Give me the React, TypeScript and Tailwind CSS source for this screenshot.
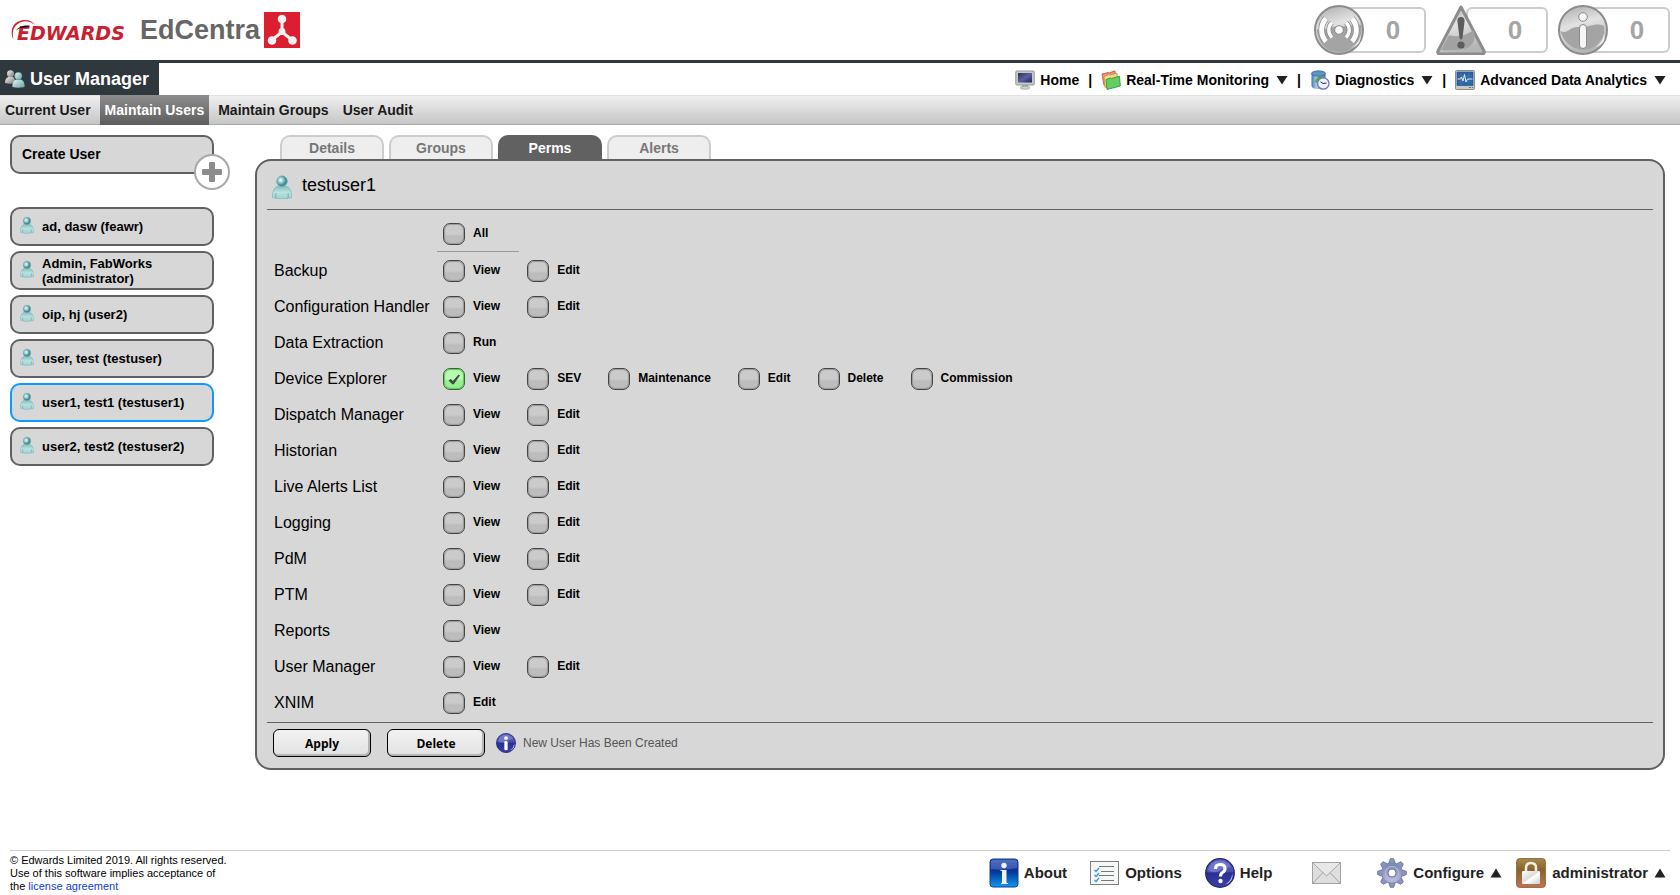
import { useState } from "react";
import type { ReactNode } from "react";

function UserIcon({ className }: { className: string }) {
  return (
    <svg viewBox="0 0 20 24" className={className} aria-hidden="true">
      <defs>
        <radialGradient id="userHead" cx="0.38" cy="0.4" r="0.65">
          <stop offset="0" stopColor="#f4fdfd" />
          <stop offset="0.3" stopColor="#a8d5d8" />
          <stop offset="0.75" stopColor="#3a8790" />
          <stop offset="1" stopColor="#5a9da3" />
        </radialGradient>
        <linearGradient id="userBody" x1="0" y1="0" x2="0" y2="1">
          <stop offset="0" stopColor="#86bfc0" />
          <stop offset="0.5" stopColor="#b9e3df" />
          <stop offset="1" stopColor="#9ccfcf" />
        </linearGradient>
      </defs>
      <path d="M6 11 Q10 13 14 11 Q18.500 12.500 19.500 19 L19.700 22.500 Q19 23.200 16.500 23 L16 23.500 Q10 24.500 4 23.500 L3.500 23 Q1 23.200 0.300 22.500 L0.500 19 Q1.500 12.500 6 11Z" fill="url(#userBody)" stroke="#7aafb3" strokeWidth="0.600" />
      <path d="M3.800 18 V23 M16.200 18 V23" stroke="#5f9ea3" strokeWidth="0.700" />
      <circle cx="10" cy="6.200" r="5.400" fill="url(#userHead)" stroke="#6ba4a9" strokeWidth="0.500" />
    </svg>
  );
}

function UsersIcon() {
  return (
    <svg viewBox="0 0 20 18" className="h-[18px] w-5" aria-hidden="true">
      <defs>
        <linearGradient id="usersGrey" x1="0" y1="0" x2="1" y2="1">
          <stop offset="0" stopColor="#f2f2f2" />
          <stop offset="1" stopColor="#777" />
        </linearGradient>
        <linearGradient id="usersTeal" x1="0" y1="0" x2="1" y2="1">
          <stop offset="0" stopColor="#e3f6f6" />
          <stop offset="1" stopColor="#68a3a8" />
        </linearGradient>
      </defs>
      <path d="M0 13 Q0 8 3.500 7 H8 Q10 8 10 13 Q5 14.500 0 13Z" fill="url(#usersGrey)" />
      <circle cx="5.500" cy="3.800" r="3.500" fill="url(#usersGrey)" />
      <path d="M7.500 17 Q7 11 11 9.500 H16 Q20 11 19.500 17 Q13 18.500 7.500 17Z" fill="url(#usersTeal)" />
      <circle cx="13.300" cy="6" r="3.700" fill="url(#usersTeal)" stroke="#4d868c" strokeWidth="0.400" />
    </svg>
  );
}

function EdwardsLogo() {
  return (
    <svg viewBox="0 0 118 26" className="h-[26px] w-[118px]" role="img" aria-label="Edwards">
      <text x="7" y="23" fontFamily="DejaVu Sans, sans-serif" fontWeight="700" fontStyle="italic" fontSize="19" fill="#c8202f">EDWARDS</text>
      <path d="M3.500 22.500 C-1 14 3 5 12 3.200 C17.500 2.200 22 3.500 25 8 C20 4 15 3.800 11.500 5 C4 7.500 1.500 14 3.500 22.500Z" fill="#c8202f" />
      <path d="M6 13.500 C9 9.500 13 8 20 8.500 L17 10.500 C12.500 10 9 11 6 13.500Z" fill="#111" />
    </svg>
  );
}

function MoleculeLogo() {
  return (
    <svg viewBox="0 0 36 36" className="size-9" aria-hidden="true">
      <rect width="36" height="36" fill="#db1f30" />
      <path d="M18 7 V20 L8 28 M18 20 L28 28" stroke="#f5f2f2" strokeWidth="3" fill="none" />
      <circle cx="18" cy="7" r="4.300" fill="#f5f2f2" />
      <circle cx="18" cy="19.500" r="3.400" fill="#f5f2f2" />
      <circle cx="8" cy="28.500" r="4.300" fill="#f5f2f2" />
      <circle cx="28.500" cy="28.500" r="4.300" fill="#f5f2f2" />
    </svg>
  );
}

function GreyDefs() {
  return (
    <svg className="absolute size-0" aria-hidden="true">
      <defs>
        <linearGradient id="greyGloss" x1="0" y1="0" x2="0.300" y2="1">
          <stop offset="0" stopColor="#a9a9a9" />
          <stop offset="0.450" stopColor="#e2e2e2" />
          <stop offset="1" stopColor="#b5b5b5" />
        </linearGradient>
      </defs>
    </svg>
  );
}

function BroadcastIcon() {
  const inner = "M18 32.500 A10.300 10.300 0 0 1 18 17.500 M32 32.500 A10.300 10.300 0 0 0 32 17.500";
  const outer = "M12 36.500 A17.300 17.300 0 0 1 12 13.500 M38 36.500 A17.300 17.300 0 0 0 38 13.500";
  return (
    <svg viewBox="0 0 50 50" className="size-[50px]" aria-hidden="true">
      <circle cx="25" cy="25" r="24" fill="url(#greyGloss)" stroke="#8c8c8c" strokeWidth="2" />
      <path d="M2.500 24 C10 27 16 21 26 21 C34 22 40 19 47.500 20 C48 30 45 36 41 39 C34 46 32 47 25 47 C12 47 4 38 2.500 24Z" fill="#a4a4a4" />
      <path d="M38 43 Q45 38 46.500 30 Q48 39 38 43Z" fill="#eee" />
      <g fill="none">
        <path d={inner} stroke="#8a8a8a" strokeWidth="5" />
        <path d={outer} stroke="#8a8a8a" strokeWidth="6.500" />
        <path d={inner} stroke="#fff" strokeWidth="3.400" />
        <path d={outer} stroke="#fff" strokeWidth="5" />
      </g>
      <circle cx="25" cy="25" r="4.300" fill="#fff" stroke="#8a8a8a" strokeWidth="1" />
    </svg>
  );
}

function WarningIcon() {
  return (
    <svg viewBox="0 0 50 50" className="size-[50px]" aria-hidden="true">
      <path d="M25 2 L48 46 Q49 49 46 49 H4 Q1 49 2 46Z" fill="url(#greyGloss)" stroke="#8c8c8c" strokeWidth="3" strokeLinejoin="round" />
      <path d="M5 45 L13 30 Q24 34 38 25 Q41 36 33 42 Q26 46 5 45Z" fill="#a2a2a2" />
      <path d="M25 12 Q29 12 28.500 17 L26.500 33 Q25 36 23.500 33 L21.500 17 Q21 12 25 12Z" fill="#5c5c5c" />
      <circle cx="25" cy="40" r="3.600" fill="#5c5c5c" />
    </svg>
  );
}

function InfoAlertIcon() {
  return (
    <svg viewBox="0 0 50 50" className="size-[50px]" aria-hidden="true">
      <circle cx="25" cy="25" r="24" fill="url(#greyGloss)" stroke="#8c8c8c" strokeWidth="2" />
      <path d="M2.500 26 C9 30 12 21 21 22 C33 23 36 17 46 21 C48 31 42 37 37 41 C28 48 8 46 2.500 26Z" fill="#a4a4a4" />
      <path d="M38 42 Q45 37 46 29 Q49 38 38 42Z" fill="#f0f0f0" />
      <circle cx="25" cy="12" r="4.300" fill="#f6f6f6" stroke="#8a8a8a" strokeWidth="1" />
      <rect x="21.500" y="19.500" width="7" height="24" rx="3.500" fill="#f6f6f6" stroke="#8a8a8a" strokeWidth="1" />
    </svg>
  );
}

function HomeIcon() {
  return (
    <svg viewBox="0 0 20 20" className="size-5" aria-hidden="true">
      <defs>
        <linearGradient id="screen" x1="0" y1="0" x2="1" y2="1">
          <stop offset="0" stopColor="#2b2f66" />
          <stop offset="0.500" stopColor="#5a609c" />
          <stop offset="1" stopColor="#20245c" />
        </linearGradient>
      </defs>
      <rect x="0.800" y="1" width="18.400" height="14" rx="1" fill="#c9c9c9" stroke="#979797" />
      <rect x="3" y="3" width="14" height="9.500" fill="url(#screen)" />
      <path d="M7 15.500 H13 V17 H7Z" fill="#777" />
      <ellipse cx="10" cy="17.700" rx="5" ry="1.600" fill="#d0d0d0" stroke="#999" strokeWidth="0.600" />
    </svg>
  );
}

function FoldersIcon() {
  return (
    <svg viewBox="0 0 20 20" className="size-5" aria-hidden="true">
      <path d="M1 4 L7 2.500 L8 3 L14 0.800 L15 12 L3 15.500Z" fill="#ef8d85" stroke="#c9453d" strokeWidth="0.800" />
      <path d="M3 6.500 L8 4.500 L9 5 L16 3.200 L17 14 L4 17.500Z" fill="#f4dc83" stroke="#bd9739" strokeWidth="0.800" />
      <path d="M5 9.500 L9.500 8 L10.500 8.500 L18.500 6.200 L19.300 16 L6 19.500Z" fill="#62cf62" stroke="#2e9635" strokeWidth="0.900" />
    </svg>
  );
}

function DiagnosticsIcon() {
  return (
    <svg viewBox="0 0 20 20" className="size-5" aria-hidden="true">
      <defs>
        <linearGradient id="drum" x1="0" y1="0" x2="1" y2="0">
          <stop offset="0" stopColor="#4478ad" />
          <stop offset="0.350" stopColor="#a9cbe8" />
          <stop offset="1" stopColor="#3b70a6" />
        </linearGradient>
      </defs>
      <path d="M1.500 3.500 V16 Q2 19 8.500 19 Q15.500 19 15.500 16 V3.500Z" fill="url(#drum)" />
      <ellipse cx="8.500" cy="3.500" rx="7" ry="2.700" fill="#5d92c3" stroke="#2f6293" strokeWidth="0.700" />
      <circle cx="13.300" cy="13.500" r="5.700" fill="#eef0fa" stroke="#6f76b8" strokeWidth="1.300" />
      <path d="M6.200 12.500 Q7 7 12.500 6.500" fill="none" stroke="#45a83c" strokeWidth="2" />
      <path d="M13 13.500 L10.500 11.800 M13 13.500 L16.500 13" stroke="#333" strokeWidth="1" />
    </svg>
  );
}

function AnalyticsIcon() {
  return (
    <svg viewBox="0 0 20 20" className="size-5" aria-hidden="true">
      <rect x="0.500" y="0.500" width="19" height="19" rx="1" fill="#c9c9c4" stroke="#8d8d8d" />
      <rect x="2" y="2" width="16" height="13.500" fill="#2b62a8" stroke="#244d82" strokeWidth="0.600" />
      <path d="M2.500 6 H17.500 M2.500 12 H17.500 M6 2.500 V15 M14 2.500 V15" stroke="#4d80bd" strokeWidth="0.500" />
      <path d="M2.500 9 H5.500 L6.500 7 L8 11 L9.500 4.500 L11 12 L12.500 9 H17.500" fill="none" stroke="#e4f1e4" strokeWidth="1" />
      <path d="M14 17.500 H16 M17 17.500 H18" stroke="#666" />
    </svg>
  );
}

function BlueOrb({ className, children }: { className: string; children: ReactNode }) {
  return (
    <svg viewBox="0 0 30 30" className={className} aria-hidden="true">
      <defs>
        <linearGradient id="orb" x1="0" y1="0" x2="0" y2="1">
          <stop offset="0" stopColor="#5a5fc0" />
          <stop offset="0.450" stopColor="#4a4fae" />
          <stop offset="0.500" stopColor="#2a2f94" />
          <stop offset="1" stopColor="#3b41a8" />
        </linearGradient>
      </defs>
      <circle cx="15" cy="15" r="14.300" fill="url(#orb)" stroke="#1f2368" strokeWidth="1.200" />
      <path d="M3 12 Q5 3 15 2.500 Q23 3 26 9 Q18 10 14 13 Q8 16 3 12Z" fill="#8d91d8" opacity="0.550" />
      <path d="M20 26.500 Q27 23 27.300 15 Q29 24 20 26.500Z" fill="#d5d7f5" />
      {children}
    </svg>
  );
}

function AboutIcon() {
  return (
    <svg viewBox="0 0 30 30" className="size-[30px]" aria-hidden="true">
      <defs>
        <linearGradient id="about" x1="0" y1="0" x2="0" y2="1">
          <stop offset="0" stopColor="#2a52b4" />
          <stop offset="0.400" stopColor="#0c2f98" />
          <stop offset="0.500" stopColor="#03409f" />
          <stop offset="1" stopColor="#1296f2" />
        </linearGradient>
      </defs>
      <rect x="1" y="1" width="28" height="28" rx="3" fill="url(#about)" stroke="#123f95" />
      <path d="M2 4 Q2 2 4 2 H26 Q28 2 28 4 V10 Q15 13 2 11Z" fill="#fff" opacity="0.180" />
      <circle cx="15" cy="7.500" r="2.700" fill="#f1f1f1" />
      <path d="M11.500 12 H17.500 V25 H19 V26 H12 V25 H13 V13 H11.500Z" fill="#f1f1f1" />
    </svg>
  );
}

function OptionsIcon() {
  return (
    <svg viewBox="0 0 30 24" className="h-6 w-[30px]" aria-hidden="true">
      <rect x="0.500" y="0.500" width="28" height="23" fill="#f6f7f7" stroke="#7e7e7e" />
      <path d="M9 5.500 H24 M11 10.500 H24 M9 14.500 H24 M11 19.500 H24" stroke="#777" />
      <path d="M4.500 9 L6 10.500 L9 7 M4.500 14 L6 15.500 L9 12 M4.500 19 L6 20.500 L9 17" fill="none" stroke="#3a9bd8" strokeWidth="1.400" />
    </svg>
  );
}

function MailIcon() {
  return (
    <svg viewBox="0 0 30 22" className="h-[22px] w-[30px]" aria-hidden="true">
      <rect x="0.500" y="0.500" width="28" height="21" fill="#dedede" stroke="#a3a3a3" />
      <path d="M1 21 L11 10.500 M28 21 L18 10.500 M1 1 L14.500 14 L28 1" fill="none" stroke="#a3a3a3" />
      <path d="M1.500 1 L14.500 13 L27.500 1Z" fill="#e8e8e8" />
    </svg>
  );
}

const TEETH = [0, 45, 90, 135, 180, 225, 270, 315];

function GearIcon() {
  return (
    <svg viewBox="0 0 30 30" className="size-[30px]" aria-hidden="true">
      <defs>
        <linearGradient id="gear" x1="0" y1="0" x2="0" y2="30" gradientUnits="userSpaceOnUse">
          <stop offset="0" stopColor="#5c80ad" />
          <stop offset="0.500" stopColor="#9a9fc7" />
          <stop offset="1" stopColor="#cfcbe6" />
        </linearGradient>
      </defs>
      <g stroke="#6d769c" strokeWidth="0.900">
        {TEETH.map((angle) => (
          <path key={angle} d="M11.500 6 L13.300 0.700 H16.700 L18.500 6Z" fill="#8c94bd" transform={`rotate(${angle} 15 15)`} />
        ))}
      </g>
      <circle cx="15" cy="15" r="10" fill="url(#gear)" stroke="#7d85ac" strokeWidth="0.500" />
      <circle cx="15" cy="15" r="6.500" fill="none" stroke="#b9bddb" strokeWidth="1" />
      <circle cx="15" cy="15" r="4" fill="#fff" stroke="#666b94" strokeWidth="0.900" />
    </svg>
  );
}

function LockIcon() {
  return (
    <svg viewBox="0 0 30 30" className="size-[30px]" aria-hidden="true">
      <defs>
        <linearGradient id="lockBox" x1="0" y1="0" x2="0" y2="1">
          <stop offset="0" stopColor="#a58a4c" />
          <stop offset="0.400" stopColor="#87632a" />
          <stop offset="1" stopColor="#bf7455" />
        </linearGradient>
        <linearGradient id="lockBody" x1="0" y1="0" x2="1" y2="1">
          <stop offset="0" stopColor="#fff" />
          <stop offset="0.450" stopColor="#ddd" />
          <stop offset="0.550" stopColor="#fff" />
          <stop offset="1" stopColor="#ccc" />
        </linearGradient>
      </defs>
      <rect x="0.600" y="0.600" width="28.800" height="28.800" rx="3" fill="url(#lockBox)" stroke="#95683a" />
      <path d="M10 14 V10 Q10 5 15 5 Q20 5 20 10 V14" fill="none" stroke="#f1eee8" strokeWidth="2.500" />
      <rect x="6" y="13" width="18" height="13" rx="1" fill="url(#lockBody)" />
    </svg>
  );
}

function Caret({ up = false }: { up?: boolean }) {
  return (
    <svg viewBox="0 0 12 10" className="h-[10px] w-3" aria-hidden="true">
      <path d={up ? "M0.500 9.500 H11.500 L6 0.500Z" : "M0.500 1 H11.500 L6 9.500Z"} fill="#222" />
    </svg>
  );
}

function AlertCounter({ label, icon }: { label: string; icon: ReactNode }) {
  return (
    <button type="button" aria-label={label} className="flex items-center">
      <span className="z-10">{icon}</span>
      <span className="-ml-5 flex h-[46px] w-[82px] items-center justify-center rounded-md border-2 border-[#ccc] bg-white pl-4 text-[26px] font-bold text-[#a5a5a5]">
        0
      </span>
    </button>
  );
}

function TopLink({ icon, text, menu = true }: { icon: ReactNode; text: string; menu?: boolean }) {
  return (
    <a href="#" className="flex items-center gap-[5px]">
      {icon}
      <span>{text}</span>
      {menu && (
        <span className="pl-[2px]">
          <Caret />
        </span>
      )}
    </a>
  );
}

const SECTIONS = ["Current User", "Maintain Users", "Maintain Groups", "User Audit"];
const TABS = ["Details", "Groups", "Perms", "Alerts"];
const USERS = [
  "ad, dasw (feawr)",
  "Admin, FabWorks (administrator)",
  "oip, hj (user2)",
  "user, test (testuser)",
  "user1, test1 (testuser1)",
  "user2, test2 (testuser2)",
];
const PERMISSIONS: { name: string; options: string[] }[] = [
  { name: "Backup", options: ["View", "Edit"] },
  { name: "Configuration Handler", options: ["View", "Edit"] },
  { name: "Data Extraction", options: ["Run"] },
  { name: "Device Explorer", options: ["View", "SEV", "Maintenance", "Edit", "Delete", "Commission"] },
  { name: "Dispatch Manager", options: ["View", "Edit"] },
  { name: "Historian", options: ["View", "Edit"] },
  { name: "Live Alerts List", options: ["View", "Edit"] },
  { name: "Logging", options: ["View", "Edit"] },
  { name: "PdM", options: ["View", "Edit"] },
  { name: "PTM", options: ["View", "Edit"] },
  { name: "Reports", options: ["View"] },
  { name: "User Manager", options: ["View", "Edit"] },
  { name: "XNIM", options: ["Edit"] },
];
const ALL_KEYS = PERMISSIONS.flatMap((p) => p.options.map((o) => `${p.name}/${o}`));

function Tick({ label, checked, onChange }: { label: string; checked: boolean; onChange: () => void }) {
  return (
    <label className="flex items-center gap-2 text-xs font-bold">
      <span className="relative flex">
        <input
          type="checkbox"
          checked={checked}
          onChange={onChange}
          className="size-[22px] appearance-none rounded-[7px] border border-[#444] bg-linear-to-b from-[#cbcbcb] from-50% to-[#bdbdbd] to-60% shadow-[inset_0_0_1px_1px_#999] checked:border-[#2f6b2f] checked:from-[#b5fbb1] checked:to-[#98ee94] checked:shadow-[inset_0_0_1px_1px_#63c55f]"
        />
        {checked && (
          <svg viewBox="0 0 22 22" className="pointer-events-none absolute inset-0" aria-hidden="true">
            <path d="M6 12.500 L8 11.500 L10 13.500 L15.500 7 L16.500 7.500 L10.500 16 H9.500Z" fill="#444" stroke="#444" strokeWidth="0.800" />
          </svg>
        )}
      </span>
      <span className="pb-[2px]">{label}</span>
    </label>
  );
}

export default function App() {
  const [granted, setGranted] = useState<string[]>(["Device Explorer/View"]);
  const toggle = (key: string) =>
    setGranted((now) => (now.includes(key) ? now.filter((k) => k !== key) : [...now, key]));
  const allOn = granted.length === ALL_KEYS.length;

  return (
    <div className="flex min-h-screen flex-col bg-white font-['Liberation_Sans',Arial,sans-serif] text-black">
      <GreyDefs />
      <header>
        <div className="flex h-[63px] items-center justify-between border-b-3 border-[#2f383d] px-[10px]">
          <div className="flex items-center">
            <EdwardsLogo />
            <h1 className="ml-3 pr-1 text-[27px] leading-8 font-bold text-[#666]">EdCentra</h1>
            <MoleculeLogo />
          </div>
          <div className="flex gap-[10px]">
            <AlertCounter label="Connection alerts" icon={<BroadcastIcon />} />
            <AlertCounter label="Warnings" icon={<WarningIcon />} />
            <AlertCounter label="Information messages" icon={<InfoAlertIcon />} />
          </div>
        </div>
        <div className="flex h-8 justify-between">
          <h2 className="flex items-center gap-[5px] bg-[#2f383d] pr-[10px] pl-[5px] text-lg font-bold text-white">
            <UsersIcon />
            User Manager
          </h2>
          <nav className="flex items-center gap-[9px] pt-[2px] pr-[14px] text-sm font-bold">
            <TopLink icon={<HomeIcon />} text="Home" menu={false} />
            <span>|</span>
            <TopLink icon={<FoldersIcon />} text="Real-Time Monitoring" />
            <span>|</span>
            <TopLink icon={<DiagnosticsIcon />} text="Diagnostics" />
            <span>|</span>
            <TopLink icon={<AnalyticsIcon />} text="Advanced Data Analytics" />
          </nav>
        </div>
        <nav className="flex h-[30px] gap-1 border-t border-b border-t-[#e2e2e2] border-b-[#aaa] bg-linear-to-b from-[#efefef] to-[#c6c6c6] text-sm font-bold">
          {SECTIONS.map((s) => (
            <a
              key={s}
              href="#"
              className={
                s === "Maintain Users"
                  ? "-my-px flex items-center bg-linear-to-b from-[#8d8d8d] to-[#5e5e5e] px-[5px] text-white"
                  : "-my-px flex items-center px-[5px] text-[#1a1a1a]"
              }
            >
              {s}
            </a>
          ))}
        </nav>
      </header>

      <main className="flex flex-1 items-start gap-[41px] pt-[10px] pr-[15px] pb-10 pl-[10px]">
        <aside className="w-[204px] shrink-0">
          <button type="button" className="relative flex h-[39px] w-full items-center rounded-[10px] border-2 border-[#616161] bg-[#d7d7d7] px-[10px] pb-[2px] text-sm font-bold">
            Create User
            <svg viewBox="0 0 36 36" className="absolute -right-[18px] -bottom-[18px] size-9" aria-hidden="true">
              <circle cx="18" cy="18" r="17" fill="#fff" stroke="#a9a9a9" strokeWidth="2" />
              <path d="M15.500 8.500 H20.500 V15.500 H27.500 V20.500 H20.500 V27.500 H15.500 V20.500 H8.500 V15.500 H15.500Z" fill="#8c8c8c" stroke="#8c8c8c" strokeLinejoin="round" />
            </svg>
          </button>
          <ul className="mt-[33px] flex flex-col gap-[5px]">
            {USERS.map((u) => (
              <li key={u}>
                <button
                  type="button"
                  className={
                    u.startsWith("user1,")
                      ? "flex h-[39px] w-full items-center gap-2 rounded-[10px] border-2 border-[#0d99ff] bg-[#d7d7d7] px-2 text-left text-[13px] leading-[15px] font-bold"
                      : "flex h-[39px] w-full items-center gap-2 rounded-[10px] border-2 border-[#616161] bg-[#d7d7d7] px-2 text-left text-[13px] leading-[15px] font-bold"
                  }
                >
                  <UserIcon className="mb-1 h-[18px] w-[14px] shrink-0" />
                  <span className="pr-2">{u}</span>
                </button>
              </li>
            ))}
          </ul>
        </aside>

        <section className="min-w-0 flex-1">
          <div role="tablist" className="flex gap-[5px] pl-[25px]">
            {TABS.map((t) => (
              <button
                key={t}
                type="button"
                role="tab"
                aria-selected={t === "Perms"}
                className={
                  t === "Perms"
                    ? "h-6 w-[104px] rounded-t-[10px] bg-[#616161] pt-[2px] text-sm font-bold text-white"
                    : "h-6 w-[104px] rounded-t-[10px] border-2 border-b-0 border-[#ccc] bg-[#eee] text-sm font-bold text-[#777]"
                }
              >
                {t}
              </button>
            ))}
          </div>
          <div className="rounded-2xl border-2 border-[#616161] bg-[#d7d7d7] px-[10px] pb-[11px]">
            <h3 className="flex h-12 items-center gap-[10px] pl-[5px] text-lg">
              <UserIcon className="mt-1 h-6 w-5" />
              testuser1
            </h3>
            <div className="border-y border-[#616161] pl-[7px]">
              <div className="ml-[163px] flex h-[42px] w-[82px] items-end border-b border-[#999] pb-[6px] pl-[6px]">
                <Tick label="All" checked={allOn} onChange={() => setGranted(allOn ? [] : ALL_KEYS)} />
              </div>
              <ul className="py-px">
                {PERMISSIONS.map((p) => (
                  <li key={p.name} className="flex h-9 items-center">
                    <span className="w-[169px] shrink-0">{p.name}</span>
                    <span className="flex gap-[27px]">
                      {p.options.map((o) => (
                        <Tick
                          key={o}
                          label={o}
                          checked={granted.includes(`${p.name}/${o}`)}
                          onChange={() => toggle(`${p.name}/${o}`)}
                        />
                      ))}
                    </span>
                  </li>
                ))}
              </ul>
            </div>
            <div className="flex items-center pt-[6px] pl-[6px]">
              <button type="button" className="h-7 w-[98px] rounded-[6px] border border-black bg-linear-to-b from-[#f2f2f2] to-[#e2e2e2] pt-px font-['Open_Sans',sans-serif] text-xs font-bold shadow-[inset_-1px_-1px_0_1px_#b5b5b5]">
                Apply
              </button>
              <button type="button" className="ml-4 h-7 w-[98px] rounded-[6px] border border-black bg-linear-to-b from-[#f2f2f2] to-[#e2e2e2] pt-px font-['Open_Sans',sans-serif] text-xs font-bold shadow-[inset_-1px_-1px_0_1px_#b5b5b5]">
                Delete
              </button>
              <BlueOrb className="ml-[11px] size-5">
                <circle cx="15" cy="7.500" r="2.800" fill="#fff" />
                <rect x="12.500" y="12" width="5" height="14" rx="2" fill="#fff" />
              </BlueOrb>
              <span role="status" className="ml-[7px] text-xs text-[#555]">
                New User Has Been Created
              </span>
            </div>
          </div>
        </section>
      </main>

      <footer className="mx-[10px] flex justify-between border-t border-[#ccc]">
        <p className="pt-[3px] pb-[2px] text-[11px] leading-[13px]">
          © Edwards Limited 2019. All rights reserved.
          <br />
          Use of this software implies acceptance of
          <br />
          the <a href="#" className="text-[#1040d8]">license agreement</a>
        </p>
        <nav className="flex h-11 items-center pr-1 text-[15px] font-bold text-[#222]">
          <a href="#" className="flex items-center gap-[5px]">
            <AboutIcon />
            About
          </a>
          <a href="#" className="ml-[23px] flex items-center gap-[5px]">
            <OptionsIcon />
            Options
          </a>
          <a href="#" className="ml-[23px] flex items-center gap-[5px]">
            <BlueOrb className="size-[30px]">
              <path d="M10.500 11 Q10.500 6.500 15 6.500 Q20 6.500 20 10.500 Q20 13 17.500 14.500 Q15.500 15.700 15.500 18.500" fill="none" stroke="#fff" strokeWidth="3.200" />
              <circle cx="15.500" cy="23" r="2.200" fill="#fff" />
            </BlueOrb>
            Help
          </a>
          <button type="button" aria-label="Messages" className="ml-10">
            <MailIcon />
          </button>
          <button type="button" className="ml-[35px] flex items-center gap-[6px]">
            <GearIcon />
            Configure
            <Caret up />
          </button>
          <button type="button" className="ml-[14px] flex items-center gap-[6px]">
            <LockIcon />
            administrator
            <Caret up />
          </button>
        </nav>
      </footer>
    </div>
  );
}
